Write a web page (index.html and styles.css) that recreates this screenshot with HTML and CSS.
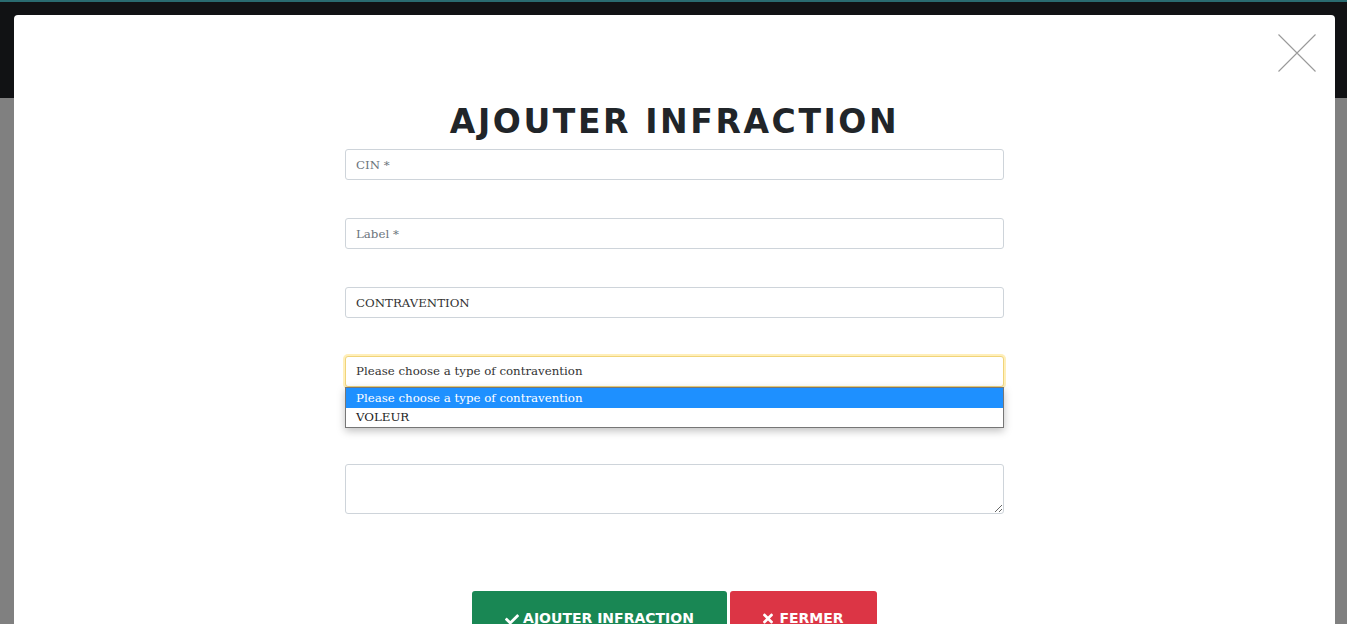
FILE: index.html
```html
<!DOCTYPE html>
<html lang="fr">
<head>
<meta charset="utf-8">
<title>Ajouter infraction</title>
<link rel="stylesheet" href="styles.css">
</head>
<body>
<div class="modal">
  <div class="modal-header">
    <button class="close" aria-label="Fermer">
      <svg width="38" height="38" viewBox="0 0 38 38"><path d="M0.5 0.5 L37.5 37.5 M37.5 0.5 L0.5 37.5" stroke="#9a9a9a" stroke-width="1.1" fill="none"/></svg>
    </button>
  </div>
  <h1 class="title">AJOUTER INFRACTION</h1>
  <form class="form">
    <div class="field"><input class="control" type="text" placeholder="CIN *"></div>
    <div class="field"><input class="control" type="text" placeholder="Label *"></div>
    <div class="field"><input class="control" type="text" value="CONTRAVENTION"></div>
    <div class="field select-field">
      <div class="control select focused">Please choose a type of contravention</div>
      <ul class="listbox">
        <li class="option selected">Please choose a type of contravention</li>
        <li class="option">VOLEUR</li>
      </ul>
    </div>
    <div class="field area-field"><textarea class="control area"></textarea></div>
    <div class="actions">
      <button type="button" class="btn btn-success">
        <svg class="ico" width="14" height="12" viewBox="0 0 512 420"><path fill="#fff" d="M173.9 410.5L7.5 244.1c-10-10-10-26.2 0-36.2l36.2-36.2c10-10 26.2-10 36.2 0L192 283.8 432.1 43.7c10-10 26.2-10 36.2 0l36.2 36.2c10 10 10 26.2 0 36.2L210.1 410.5c-10 10-26.2 10-36.2 0z"/></svg>
        <span>AJOUTER INFRACTION</span>
      </button>
      <button type="button" class="btn btn-danger">
        <svg class="ico" width="10" height="11" viewBox="0 0 352 352"><path fill="#fff" d="M242.7 176L342.8 75.9c12.3-12.3 12.3-32.2 0-44.5L320.6 9.2c-12.3-12.3-32.2-12.3-44.5 0L176 109.3 75.9 9.2C63.6-3.1 43.7-3.1 31.4 9.2L9.2 31.4c-12.3 12.3-12.3 32.2 0 44.5L109.3 176 9.2 276.1c-12.3 12.3-12.3 32.2 0 44.5l22.2 22.2c12.3 12.3 32.2 12.3 44.5 0L176 242.7l100.1 100.1c12.3 12.3 32.2 12.3 44.5 0l22.2-22.2c12.3-12.3 12.3-32.2 0-44.5L242.7 176z"/></svg>
        <span>FERMER</span>
      </button>
    </div>
  </form>
</div>
</body>
</html>
```

FILE: styles.css
```css
html, body {
  margin: 0;
  padding: 0;
  height: 624px;
  overflow: hidden;
}
body {
  background: linear-gradient(to bottom, #2a6b70 0, #2a6b70 2px, #111214 2px, #111214 98px, #808080 98px);
  font-family: "DejaVu Serif", serif;
}
.modal {
  margin: 15px 12px 0 14px;
  background: #fff;
  border-radius: 4px 4px 0 0;
  height: 700px;
  box-sizing: border-box;
}
.modal-header {
  display: flex;
  justify-content: flex-end;
  padding: 19px 19px 0 0;
}
.close {
  width: 38px;
  height: 38px;
  padding: 0;
  border: 0;
  background: none;
  display: block;
}
.close svg { display: block; }
.title {
  margin: 30px 0 0;
  text-align: center;
  font-family: "DejaVu Sans", sans-serif;
  font-weight: 700;
  font-size: 33px;
  line-height: 40px;
  color: #212529;
  letter-spacing: 2.6px;
}
.form {
  width: 659px;
  margin: 7px auto 0;
  display: flex;
  flex-direction: column;
}
.field {
  margin-bottom: 38px;
}
.control {
  display: block;
  width: 100%;
  box-sizing: border-box;
  height: 31px;
  padding: 0 10px;
  border: 1px solid #ced4da;
  border-radius: 3px;
  font-family: "DejaVu Serif", serif;
  font-size: 11.8px;
  color: #333;
  background: #fff;
  outline: none;
}
.control::placeholder { color: #6c757d; }
.select-field {
  position: relative;
  margin-bottom: 77px;
}
.select {
  display: flex;
  align-items: center;
  line-height: 1;
}
.focused {
  border-color: #f0d47a;
  box-shadow: 0 0 0 2px rgba(255, 226, 130, 0.55);
}
.listbox {
  position: absolute;
  left: 0;
  right: 0;
  top: 31px;
  margin: 0;
  padding: 0;
  list-style: none;
  background: #fff;
  border: 1px solid #767676;
  box-shadow: 0 3px 8px rgba(0, 0, 0, 0.25);
  z-index: 2;
}
.option {
  height: 19px;
  line-height: 19px;
  padding: 0 10px;
  font-size: 11.8px;
  color: #222;
}
.option.selected {
  background: #1e90ff;
  color: #fff;
  height: 20px;
  line-height: 20px;
}
.area-field { margin-bottom: 77px; }
.area {
  height: 50px;
  resize: vertical;
  padding: 6px 10px;
}
.actions {
  display: flex;
  justify-content: center;
  gap: 3px;
}
.btn {
  display: flex;
  align-items: flex-start;
  justify-content: center;
  gap: 4px;
  height: 44px;
  padding: 19px 0 0;
  border: 0;
  border-radius: 3px;
  color: #fff;
  font-family: "DejaVu Sans", sans-serif;
  font-weight: 700;
  font-size: 14px;
  line-height: 16px;
  box-sizing: border-box;
}
.ico { margin-top: 3px; }
.btn-success { background: #198754; width: 255px; }
.btn-danger { background: #dc3545; width: 147px; gap: 6px; }
```
